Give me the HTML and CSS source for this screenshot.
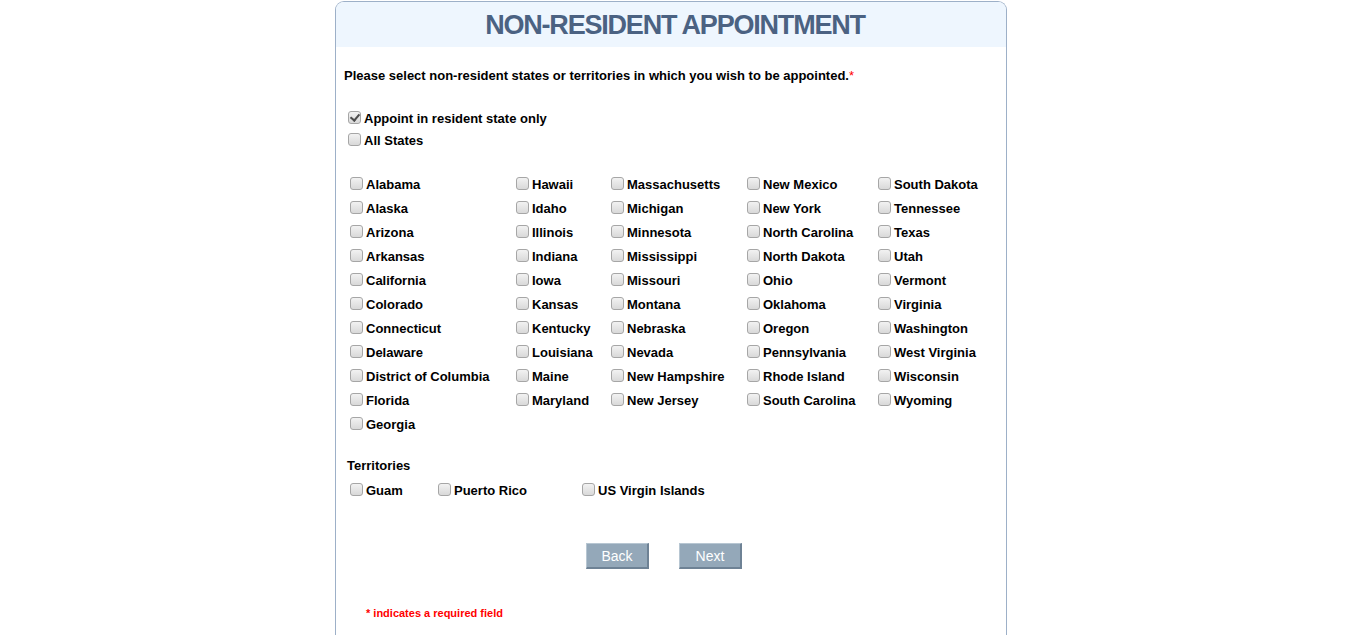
FILE: index.html
```html
<!DOCTYPE html>
<html lang="en">
<head>
<meta charset="utf-8">
<title>Non-Resident Appointment</title>
<link rel="stylesheet" href="styles.css">
</head>
<body>
<div class="panel">
  <div class="panel-head"><h1 class="title">NON-RESIDENT APPOINTMENT</h1></div>
  <div class="panel-body">
    <p class="intro">Please select non-resident states or territories in which you wish to be appointed.<span class="req">*</span></p>

    <div class="options">
      <label class="opt"><input type="checkbox" checked><span>Appoint in resident state only</span></label>
      <label class="opt"><input type="checkbox"><span>All States</span></label>
    </div>

    <div class="states">
      <label class="opt"><input type="checkbox"><span>Alabama</span></label>
      <label class="opt"><input type="checkbox"><span>Hawaii</span></label>
      <label class="opt"><input type="checkbox"><span>Massachusetts</span></label>
      <label class="opt"><input type="checkbox"><span>New Mexico</span></label>
      <label class="opt"><input type="checkbox"><span>South Dakota</span></label>

      <label class="opt"><input type="checkbox"><span>Alaska</span></label>
      <label class="opt"><input type="checkbox"><span>Idaho</span></label>
      <label class="opt"><input type="checkbox"><span>Michigan</span></label>
      <label class="opt"><input type="checkbox"><span>New York</span></label>
      <label class="opt"><input type="checkbox"><span>Tennessee</span></label>

      <label class="opt"><input type="checkbox"><span>Arizona</span></label>
      <label class="opt"><input type="checkbox"><span>Illinois</span></label>
      <label class="opt"><input type="checkbox"><span>Minnesota</span></label>
      <label class="opt"><input type="checkbox"><span>North Carolina</span></label>
      <label class="opt"><input type="checkbox"><span>Texas</span></label>

      <label class="opt"><input type="checkbox"><span>Arkansas</span></label>
      <label class="opt"><input type="checkbox"><span>Indiana</span></label>
      <label class="opt"><input type="checkbox"><span>Mississippi</span></label>
      <label class="opt"><input type="checkbox"><span>North Dakota</span></label>
      <label class="opt"><input type="checkbox"><span>Utah</span></label>

      <label class="opt"><input type="checkbox"><span>California</span></label>
      <label class="opt"><input type="checkbox"><span>Iowa</span></label>
      <label class="opt"><input type="checkbox"><span>Missouri</span></label>
      <label class="opt"><input type="checkbox"><span>Ohio</span></label>
      <label class="opt"><input type="checkbox"><span>Vermont</span></label>

      <label class="opt"><input type="checkbox"><span>Colorado</span></label>
      <label class="opt"><input type="checkbox"><span>Kansas</span></label>
      <label class="opt"><input type="checkbox"><span>Montana</span></label>
      <label class="opt"><input type="checkbox"><span>Oklahoma</span></label>
      <label class="opt"><input type="checkbox"><span>Virginia</span></label>

      <label class="opt"><input type="checkbox"><span>Connecticut</span></label>
      <label class="opt"><input type="checkbox"><span>Kentucky</span></label>
      <label class="opt"><input type="checkbox"><span>Nebraska</span></label>
      <label class="opt"><input type="checkbox"><span>Oregon</span></label>
      <label class="opt"><input type="checkbox"><span>Washington</span></label>

      <label class="opt"><input type="checkbox"><span>Delaware</span></label>
      <label class="opt"><input type="checkbox"><span>Louisiana</span></label>
      <label class="opt"><input type="checkbox"><span>Nevada</span></label>
      <label class="opt"><input type="checkbox"><span>Pennsylvania</span></label>
      <label class="opt"><input type="checkbox"><span>West Virginia</span></label>

      <label class="opt"><input type="checkbox"><span>District of Columbia</span></label>
      <label class="opt"><input type="checkbox"><span>Maine</span></label>
      <label class="opt"><input type="checkbox"><span>New Hampshire</span></label>
      <label class="opt"><input type="checkbox"><span>Rhode Island</span></label>
      <label class="opt"><input type="checkbox"><span>Wisconsin</span></label>

      <label class="opt"><input type="checkbox"><span>Florida</span></label>
      <label class="opt"><input type="checkbox"><span>Maryland</span></label>
      <label class="opt"><input type="checkbox"><span>New Jersey</span></label>
      <label class="opt"><input type="checkbox"><span>South Carolina</span></label>
      <label class="opt"><input type="checkbox"><span>Wyoming</span></label>

      <label class="opt"><input type="checkbox"><span>Georgia</span></label>
    </div>

    <div class="terr-label">Territories</div>
    <div class="territories">
      <label class="opt"><input type="checkbox"><span>Guam</span></label>
      <label class="opt"><input type="checkbox"><span>Puerto Rico</span></label>
      <label class="opt"><input type="checkbox"><span>US Virgin Islands</span></label>
    </div>

    <div class="actions">
      <button type="button" class="btn">Back</button>
      <button type="button" class="btn">Next</button>
    </div>

    <p class="note">* indicates a required field</p>
  </div>
</div>
</body>
</html>
```

FILE: styles.css
```css
html, body {
  margin: 0;
  padding: 0;
  background: #ffffff;
}
body {
  padding-right: 5px;
  font-family: "Liberation Sans", Arial, sans-serif;
  color: #000;
}
.panel {
  width: 670px;
  margin: 1px auto 0;
  border: 1px solid #9db0c8;
  border-bottom: none;
  border-radius: 9px 9px 0 0;
  overflow: hidden;
}
.panel-head {
  height: 45px;
  background: #eef6fe;
  display: flex;
  align-items: center;
  justify-content: center;
}
.title {
  margin: 0;
  padding-left: 8px;
  font-size: 27px;
  letter-spacing: -1.2px;
  font-weight: bold;
  color: #4b6282;
  line-height: 30px;
}
.panel-body {
  padding: 0 0 18px 8px;
}
.intro {
  margin: 21px 0 0;
  font-size: 13px;
  font-weight: bold;
  line-height: 16px;
}
.req {
  color: #ff0000;
  font-weight: normal;
}
.opt {
  display: flex;
  align-items: center;
  font-size: 13px;
  font-weight: bold;
  white-space: nowrap;
}
.opt input {
  appearance: none;
  -webkit-appearance: none;
  width: 13px;
  height: 13px;
  margin: 0 3px 2px 0;
  border: 1px solid #a6a6a6;
  border-radius: 3px;
  background: linear-gradient(#f2f2f2, #d9d9d9);
  position: relative;
  flex: none;
}
.opt input:checked::after {
  content: "";
  position: absolute;
  left: 3px;
  top: 0px;
  width: 4px;
  height: 7px;
  border: solid #4d4d4d;
  border-width: 0 2px 2px 0;
  transform: rotate(40deg);
}
.options {
  margin: 23px 0 0 4px;
}
.options .opt {
  height: 22px;
}
.states {
  margin: 21px 0 0 6px;
  display: grid;
  grid-template-columns: 166px 95px 136px 131px 1fr;
  grid-auto-rows: 24px;
}
.terr-label {
  margin: 22px 0 0 3px;
  font-size: 13px;
  font-weight: bold;
  line-height: 16px;
}
.territories {
  margin: 4px 0 0 6px;
  display: grid;
  grid-template-columns: 88px 144px 1fr;
  grid-auto-rows: 24px;
}
.actions {
  margin-top: 41px;
  padding-left: 242px;
  display: flex;
  gap: 30px;
}
.btn {
  width: 63px;
  height: 26px;
  padding: 0;
  font-family: "Liberation Sans", Arial, sans-serif;
  font-size: 14px;
  color: #ffffff;
  background: #94a8b9;
  border-style: solid;
  border-width: 1px 2px 2px 1px;
  border-color: #b7c6d2 #6e8295 #6e8295 #b7c6d2;
  border-radius: 0;
}
.note {
  margin: 37px 0 0 22px;
  font-size: 11px;
  font-weight: bold;
  color: #ff0000;
  line-height: 14px;
}
```
